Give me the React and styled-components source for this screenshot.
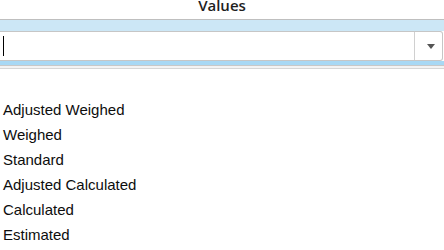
import React from 'react';
import styled, { createGlobalStyle } from 'styled-components';

const Global = createGlobalStyle`
  body {
    margin: 0;
    background: #fff;
    font-family: "Liberation Sans", Arial, sans-serif;
  }
`;

const Page = styled.div`
  width: 444px;
  height: 250px;
  overflow: hidden;
  background: #fff;
`;

// titel is half cut off at the top
const Header = styled.div`
  height: 20px;
  box-sizing: border-box;
  border-bottom: 1px solid #bfbfbf;
  overflow: hidden;
  text-align: center;
`;

const Title = styled.div`
  margin-top: -2px;
  font-family: "Open Sans", sans-serif;
  font-weight: 600;
  font-size: 15px;
  line-height: 15px;
  color: #1e1e1e;
`;

const Band = styled.div`
  background: ${p => p.tone};
  height: ${p => p.h}px;
`;

const Field = styled.div`
  display: flex;
  height: 30px;
  box-sizing: border-box;
  margin-right: 1px;
  background: #fff;
  border: 1px solid #c6c6c6;
  border-left: none;
  border-radius: 0 3px 3px 0;
`;

const Entry = styled.div`
  flex: 1;
  display: flex;
  align-items: center;
  padding-left: 3px;
`;

const Caret = styled.span`
  width: 1px;
  height: 20px;
  background: #000;
`;

const Toggle = styled.div`
  width: 28px;
  border-left: 1px solid #d0d0d0;
  display: flex;
  align-items: center;
  justify-content: center;
  padding-left: 4px;
  box-sizing: border-box;
`;

const Arrow = styled.span`
  width: 0;
  height: 0;
  border-left: 4.5px solid transparent;
  border-right: 4.5px solid transparent;
  border-top: 5px solid #555;
`;

const Divider = styled.div`
  height: 2px;
  background: #f3f3f3;
  border-top: 1px solid #c8c8c8;
  border-bottom: 1px solid #d6d6d6;
`;

const List = styled.ul`
  list-style: none;
  margin: 0;
  padding: 28px 0 0 3px;
`;

const Item = styled.li`
  font-size: 15px;
  line-height: 25px;
  color: #0d0d0d;
`;

const values = [
  'Adjusted Weighed',
  'Weighed',
  'Standard',
  'Adjusted Calculated',
  'Calculated',
  'Estimated'
];

export default function App() {
  return (
    <Page>
      <Global />
      <Header>
        <Title>Values</Title>
      </Header>
      <Band tone="#cce7f6" h={11} />
      <Field>
        <Entry>
          <Caret />
        </Entry>
        <Toggle>
          <Arrow />
        </Toggle>
      </Field>
      <Band tone="#a8d8f4" h={4} />
      <Divider />
      <List>
        {values.map(v => (
          <Item key={v}>{v}</Item>
        ))}
      </List>
    </Page>
  );
}
